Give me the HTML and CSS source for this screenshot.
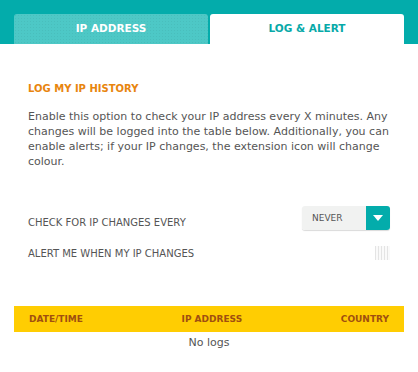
FILE: index.html
```html
<!DOCTYPE html>
<html lang="en">
<head>
	<meta charset="UTF-8">
	<title>IP Address</title>
	<link rel="stylesheet" href="styles.css">
</head>
<body>
	<div class="header">
		<ul class="list-tab">
			<li class="item-tab">IP ADDRESS</li>
			<li class="item-tab selected">LOG &amp; ALERT</li>
		</ul>
	</div>
	<div class="content">
		<h2 class="title">LOG MY IP HISTORY</h2>
		<p class="desc">Enable this option to check your IP address every X minutes. Any changes will be logged into the table below. Additionally, you can enable alerts; if your IP changes, the extension icon will change colour.</p>
		<div class="row">
			<span class="label">CHECK FOR IP CHANGES EVERY</span>
			<div class="select">
				<span class="select-value">NEVER</span>
				<span class="select-btn">
					<svg width="10" height="6" viewBox="0 0 10 6"><path d="M0 0h10L5 6z" fill="#fff"/></svg>
				</span>
			</div>
		</div>
		<div class="row row-alert">
			<span class="label">ALERT ME WHEN MY IP CHANGES</span>
			<span class="check"></span>
		</div>
	</div>
	<div class="table">
		<div class="table-head">
			<span class="col-date">DATE/TIME</span>
			<span class="col-ip">IP ADDRESS</span>
			<span class="col-country">COUNTRY</span>
		</div>
		<div class="empty">No logs</div>
	</div>
</body>
</html>
```

FILE: styles.css
```css
body{
	margin: 0; background: #fff; font-family: "DejaVu Sans", sans-serif; color: #555;
}
.header{
	background: #03acab; height: 44px; padding: 14px 14px 0; box-sizing: border-box;
}
.list-tab{
	list-style: none; margin: 0; padding: 0; display: flex; gap: 2px; height: 30px;
}
.item-tab{
	flex: 1; text-align: center; line-height: 28px; border-radius: 3px 3px 0 0;
	font-size: 10.5px; font-weight: bold; color: #fff;
	background-color: #4dc8c6;
	background-image: radial-gradient(rgba(0,0,0,0.05) 1px, transparent 1px);
	background-size: 3px 3px;
}
.item-tab.selected{
	background: #fff; color: #07a9a8;
}
.content{
	padding: 0 28px;
}
.title{
	margin: 38px 0 0; font-size: 10px; line-height: 14px; font-weight: bold; color: #e8850e;
}
.desc{
	margin: 13px 0 0; font-size: 11px; line-height: 15px;
}
.row{
	display: flex; justify-content: space-between; align-items: center; margin-top: 37px;
}
.label{
	font-size: 10px;
}
.select{
	display: flex; width: 88px; height: 24px; border-radius: 3px; overflow: hidden;
	box-shadow: 0 1px 1px rgba(0,0,0,0.15); margin-bottom: 8px;
}
.select-value{
	flex: 1; background: #f1f2f1; font-size: 9px; line-height: 24px; padding-left: 10px; color: #555;
}
.select-btn{
	width: 24px; background: #03acab; display: flex; align-items: center; justify-content: center;
}
.row-alert{
	margin-top: 8px;
}
.check{
	width: 15px; height: 14px;
	background: repeating-linear-gradient(90deg, #e4e4e4 0 1px, #fafafa 1px 3px);
}
.table{
	margin: 46px 14px 0;
}
.table-head{
	display: flex; justify-content: space-between; align-items: center; height: 26px; padding: 0 15px;
	background: #ffcd02; color: #a04f10; font-size: 9px; font-weight: bold;
}
.empty{
	text-align: center; font-size: 11px; line-height: 22px; color: #555;
}
```
